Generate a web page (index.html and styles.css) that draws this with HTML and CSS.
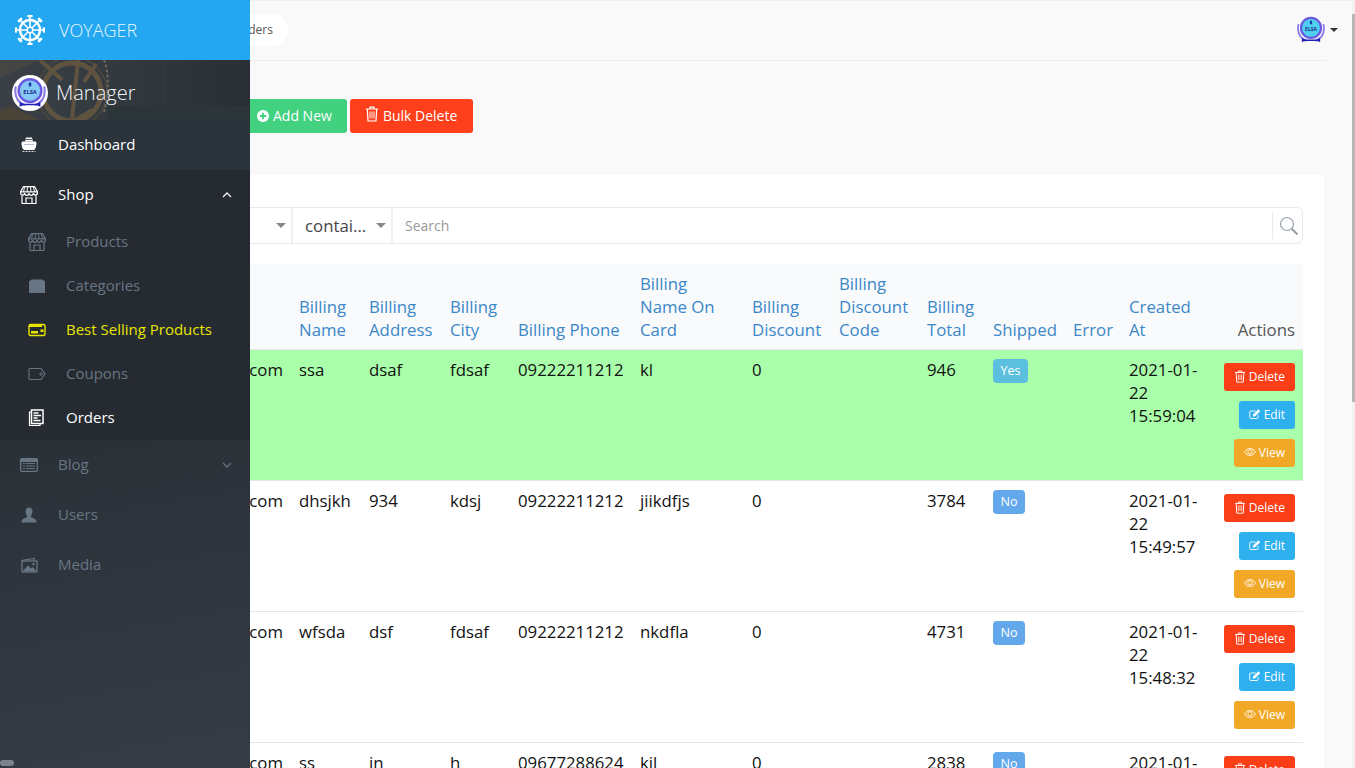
FILE: index.html
```html
<!DOCTYPE html>
<html lang="en">
<head>
<meta charset="utf-8">
<title>Orders</title>
<link rel="stylesheet" href="styles.css">
</head>
<body>
<svg class="defs" width="0" height="0">
  <symbol id="i-store" viewBox="0 0 18 18">
    <path d="M3.500 .7h11l3 5.200H.5z" fill="none" stroke="currentColor" stroke-width="1.200"/>
    <path d="M.6 5.900v1.200a2 2 0 0 0 4 0 2.200 2.200 0 0 0 4.400 0 2.200 2.200 0 0 0 4.400 0 2 2 0 0 0 4 0V5.900" fill="none" stroke="currentColor" stroke-width="1.200"/>
    <path d="M4.500 1 3.500 6M7.500 1 7 6M10.500 1 11 6M13.500 1l1 5" stroke="currentColor" stroke-width="1"/>
    <path d="M2 9.500v8h14v-8M6 17.500V12h6v5.500" fill="none" stroke="currentColor" stroke-width="1.200"/>
  </symbol>
  <symbol id="i-trash" viewBox="0 0 14 16">
    <path d="M1 3h12M5 3V1.200h4V3M2.300 3l.7 12h8l.7-12" fill="none" stroke="currentColor" stroke-width="1.200"/>
    <path d="M5 5.500v7M7 5.500v7M9 5.500v7" stroke="currentColor" stroke-width=".9"/>
  </symbol>
  <symbol id="i-edit" viewBox="0 0 16 14">
    <path d="M12 8.500V12a1.200 1.200 0 0 1-1.200 1H2.200A1.200 1.200 0 0 1 1 12V4a1.200 1.200 0 0 1 1.200-1H9" fill="none" stroke="currentColor" stroke-width="1.200"/>
    <path d="M5.500 7.500 12.500 .8l2.500 2.400-7 6.800-3 .6z" fill="currentColor"/>
  </symbol>
  <symbol id="i-eye" viewBox="0 0 14 10">
    <path d="M.6 5C2.500 2 4.600 1 7 1s4.500 1 6.400 4C11.500 8 9.400 9 7 9S2.500 8 .6 5z" fill="none" stroke="currentColor" stroke-width="1"/>
    <circle cx="7" cy="4.800" r="2.600" fill="none" stroke="currentColor" stroke-width="1"/>
  </symbol>
  <symbol id="i-emblem" viewBox="0 0 36 36">
    <path d="M3 11c-2 10 2 17 10 20M33 11c2 10-2 17-10 20" fill="none" stroke="#8d7ce6" stroke-width="2.200"/>
    <circle cx="18" cy="15.500" r="12" class="emblem-disc" stroke="#6a5be0" stroke-width="2.600"/>
    <path d="M7 27.500l4 1.800h14l4-1.800v5l-4-1.400H11l-4 1.400z" fill="#2222b8"/>
    <ellipse cx="18" cy="9" rx="1.500" ry="2.400" fill="#1f3fa8"/>
    <text x="18" y="19" class="emblem-text">ELSA</text>
  </symbol>
</svg>

<aside class="sidebar">
  <div class="brand">
    <svg class="brand-helm" viewBox="-15 -15 30 30" width="30" height="30">
      <circle r="10" fill="none" stroke="#fff" stroke-width="2.400"/>
      <circle r="2.800" fill="none" stroke="#fff" stroke-width="1.500"/>
      <g stroke="#fff" stroke-width="1.600">
        <path d="M0-15V-3M0 3V15M-15 0H-3M3 0H15M-10-10-2-2M2 2 10 10M10-10 2-2M-2 2-10 10"/>
      </g>
      <g stroke="#fff" stroke-width="2.600" stroke-linecap="round">
        <path d="M-1.500-14H1.500M-1.500 14H1.500M-14-1.500V1.500M14-1.500V1.500M-11-9-9-11M9-11 11-9M-11 9-9 11M9 11 11 9"/>
      </g>
    </svg>
    <span class="brand-name">VOYAGER</span>
  </div>
  <div class="profile">
    <svg class="profile-bg" viewBox="0 0 250 60" width="250" height="60">
      <defs>
        <linearGradient id="bg-fade" x1="0" x2="1" y1="0" y2="0">
          <stop offset="0" stop-color="#3a4045"/>
          <stop offset=".45" stop-color="#333a3f"/>
          <stop offset="1" stop-color="#292f34"/>
        </linearGradient>
      </defs>
      <rect width="250" height="60" fill="url(#bg-fade)"/>
      <rect x="108" y="46" width="142" height="14" fill="#2c3639"/>
      <path d="M165 0V46" stroke="#363d42" stroke-width="1"/>
      <path d="M0 0h40L0 18z" fill="#454644"/>
      <g fill="none" stroke="#5f5340">
        <circle cx="72" cy="32" r="29" stroke-width="5"/>
        <circle cx="72" cy="32" r="35" stroke-width="1.500" stroke="#4d473c"/>
        <path d="M78 0 72 60M96 4 84 22M92 50 76 60M40 0 62 20" stroke-width="4"/>
        <path d="M104 0c5 12 5 30 0 52" stroke="#70675a" stroke-width="2" stroke-dasharray="3 2"/>
      </g>
      <path d="M0 50 10 46 40 60H0z" fill="#4a4338"/>
    </svg>
    <span class="avatar-ring"><svg class="emblem-white" width="34" height="34"><use href="#i-emblem"/></svg></span>
    <span class="profile-name">Manager</span>
  </div>
  <nav class="menu">
    <a class="item item-light">
      <svg class="ico" viewBox="0 0 18 18" width="18" height="18">
        <path d="M6 1.500h6l1 4H5z" fill="#fff"/>
        <path d="M5.500 3.500h7" stroke="#2b343b" stroke-width=".8"/>
        <path d="M1.500 7c0-1 .8-1.500 1.500-1.500h12c.7 0 1.500.5 1.500 1.500 0 3-1 6-2.500 7H4C2.500 13 1.500 10 1.500 7z" fill="#fff"/>
        <path d="M4 8.500h10" stroke="#b8bec3" stroke-width="1"/>
        <path d="M2.500 15.500h13" stroke="#d5d9dc" stroke-width="1" stroke-dasharray="2 1"/>
      </svg>
      <span>Dashboard</span>
    </a>
    <a class="item item-open">
      <svg class="ico" width="18" height="18"><use href="#i-store"/></svg>
      <span>Shop</span>
      <svg class="chev" viewBox="0 0 10 6" width="10" height="6"><path d="M1 5l4-4 4 4" fill="none" stroke="currentColor" stroke-width="1.300"/></svg>
    </a>
    <div class="submenu">
      <a class="sub muted">
        <svg class="ico" width="18" height="18"><use href="#i-store"/></svg>
        <span>Products</span>
      </a>
      <a class="sub muted">
        <svg class="ico" viewBox="0 0 18 18" width="18" height="18"><path d="M3.500 2.500h11l2.500 2v11.500H1V4.500z" fill="currentColor"/></svg>
        <span>Categories</span>
      </a>
      <a class="sub active">
        <svg class="ico" viewBox="0 0 18 18" width="18" height="18">
          <path d="M1 3.500h13v2.500H1z" fill="currentColor"/>
          <rect x="1" y="3.500" width="16" height="11" rx="1.500" fill="none" stroke="currentColor" stroke-width="1.400"/>
          <path d="M3 10h7v2.500H3zM12.500 8.500h3V11h-3z" fill="currentColor"/>
        </svg>
        <span>Best Selling Products</span>
      </a>
      <a class="sub muted">
        <svg class="ico" viewBox="0 0 18 18" width="18" height="18">
          <path d="M2 3.500h11l4 5.500-4 5.500H2a1 1 0 0 1-1-1V4.500a1 1 0 0 1 1-1z" fill="none" stroke="currentColor" stroke-width="1.100"/>
          <circle cx="13" cy="9" r="1.200" fill="none" stroke="currentColor"/>
        </svg>
        <span>Coupons</span>
      </a>
      <a class="sub sub-light">
        <svg class="ico" viewBox="0 0 18 18" width="18" height="18">
          <path d="M3 3H1.500v13.500H12V15" fill="none" stroke="currentColor" stroke-width="1.200"/>
          <rect x="3.500" y="1" width="11.500" height="13.500" fill="none" stroke="currentColor" stroke-width="1.500"/>
          <path d="M5.500 4h5M5.500 6.500h7.500M5.500 9h4M5.500 11.500h7" stroke="currentColor" stroke-width="1.300"/>
        </svg>
        <span>Orders</span>
      </a>
    </div>
    <a class="item muted">
      <svg class="ico" viewBox="0 0 18 18" width="18" height="18">
        <rect x=".7" y="2.700" width="16.600" height="12.600" rx="1" fill="none" stroke="currentColor" stroke-width="1.300"/>
        <path d="M1 3h16v2.500H1zM3 7.500h2M6 7.500h9M3 10h2M6 10h9M3 12.500h2M6 12.500h9" fill="currentColor" stroke="currentColor" stroke-width="1"/>
      </svg>
      <span>Blog</span>
      <svg class="chev" viewBox="0 0 10 6" width="10" height="6"><path d="M1 1l4 4 4-4" fill="none" stroke="currentColor" stroke-width="1.300"/></svg>
    </a>
    <a class="item muted">
      <svg class="ico" viewBox="0 0 18 18" width="18" height="18">
        <path d="M9 1.500c2.300 0 3.500 1.800 3.500 4S11 9 11 10.500c0 1.500 5 1.500 5.500 5v1h-15v-1c.5-3.500 5.500-3.500 5.500-5C7 9 5.500 7.700 5.500 5.500s1.200-4 3.500-4z" fill="currentColor"/>
      </svg>
      <span>Users</span>
    </a>
    <a class="item muted">
      <svg class="ico" viewBox="0 0 18 18" width="18" height="18">
        <path d="M1.500 4.500 14 2.500l.5 2" fill="none" stroke="currentColor" stroke-width="1.200"/>
        <rect x="2" y="5" width="15" height="11" fill="none" stroke="currentColor" stroke-width="1.300"/>
        <path d="M2.500 15.500 8 9.500l3 3 2-1.500 3.500 4.500z" fill="currentColor"/>
        <circle cx="13.500" cy="8" r="1.200" fill="currentColor"/>
      </svg>
      <span>Media</span>
    </a>
  </nav>
  <i class="side-thumb"></i>
</aside>

<main class="main">
  <header class="navbar">
    <div class="crumb">Orders</div>
    <div class="user">
      <svg width="30" height="30"><use href="#i-emblem"/></svg>
      <i class="caret"></i>
    </div>
  </header>
  <div class="nav-rule"></div>

  <div class="toolbar">
    <a class="btn btn-add">
      <svg class="add-ico" viewBox="0 0 12 12" width="12" height="12"><circle cx="6" cy="6" r="6" fill="#fff"/><path d="M6 2.800v6.400M2.800 6h6.400" stroke="#42d17f" stroke-width="1.800"/></svg>
      Add New
    </a>
    <a class="btn btn-bulk">
      <svg width="14" height="16" class="bulk-ico"><use href="#i-trash"/></svg>
      Bulk Delete
    </a>
  </div>

  <section class="card">
    <div class="search">
      <div class="select select-a"><i class="arrow"></i></div>
      <div class="select select-b"><span>contai...</span><i class="arrow"></i></div>
      <div class="search-input">Search</div>
      <div class="search-btn">
        <svg viewBox="0 0 20 20" width="20" height="20">
          <circle cx="8" cy="8" r="6.500" fill="none" stroke="#9aa3ad" stroke-width="1.200"/>
          <path d="M12.800 12.800 18.500 18.500" stroke="#9aa3ad" stroke-width="2.200"/>
        </svg>
      </div>
    </div>

    <table class="orders">
      <colgroup>
        <col class="c0"><col class="c1"><col class="c2"><col class="c3"><col class="c4"><col class="c5"><col class="c6"><col class="c7"><col class="c8"><col class="c9"><col class="c10"><col class="c11"><col class="c12">
      </colgroup>
      <thead>
        <tr>
          <th>Billing Email</th>
          <th>Billing Name</th>
          <th>Billing Address</th>
          <th>Billing City</th>
          <th>Billing Phone</th>
          <th>Billing Name On Card</th>
          <th>Billing Discount</th>
          <th>Billing Discount Code</th>
          <th>Billing Total</th>
          <th>Shipped</th>
          <th>Error</th>
          <th>Created At</th>
          <th class="th-actions">Actions</th>
        </tr>
      </thead>
      <tbody>
        <tr class="row-shipped">
          <td class="email">customer@mail.com</td><td>ssa</td><td>dsaf</td><td>fdsaf</td><td>09222211212</td><td>kl</td><td>0</td><td></td><td>946</td>
          <td><span class="badge badge-yes">Yes</span></td><td></td><td>2021-01-22 15:59:04</td>
          <td><div class="actions">
            <a class="mini mini-del"><svg width="12" height="13"><use href="#i-trash"/></svg>Delete</a>
            <a class="mini mini-edit"><svg width="12" height="12"><use href="#i-edit"/></svg>Edit</a>
            <a class="mini mini-view"><svg width="12" height="10"><use href="#i-eye"/></svg>View</a>
          </div></td>
        </tr>
        <tr>
          <td class="email">customer@mail.com</td><td>dhsjkh</td><td>934</td><td>kdsj</td><td>09222211212</td><td>jiikdfjs</td><td>0</td><td></td><td>3784</td>
          <td><span class="badge badge-no">No</span></td><td></td><td>2021-01-22 15:49:57</td>
          <td><div class="actions">
            <a class="mini mini-del"><svg width="12" height="13"><use href="#i-trash"/></svg>Delete</a>
            <a class="mini mini-edit"><svg width="12" height="12"><use href="#i-edit"/></svg>Edit</a>
            <a class="mini mini-view"><svg width="12" height="10"><use href="#i-eye"/></svg>View</a>
          </div></td>
        </tr>
        <tr>
          <td class="email">customer@mail.com</td><td>wfsda</td><td>dsf</td><td>fdsaf</td><td>09222211212</td><td>nkdfla</td><td>0</td><td></td><td>4731</td>
          <td><span class="badge badge-no">No</span></td><td></td><td>2021-01-22 15:48:32</td>
          <td><div class="actions">
            <a class="mini mini-del"><svg width="12" height="13"><use href="#i-trash"/></svg>Delete</a>
            <a class="mini mini-edit"><svg width="12" height="12"><use href="#i-edit"/></svg>Edit</a>
            <a class="mini mini-view"><svg width="12" height="10"><use href="#i-eye"/></svg>View</a>
          </div></td>
        </tr>
        <tr>
          <td class="email">customer@mail.com</td><td>ss</td><td>in</td><td>h</td><td>09677288624</td><td>kil</td><td>0</td><td></td><td>2838</td>
          <td><span class="badge badge-no">No</span></td><td></td><td>2021-01-22 15:40:11</td>
          <td><div class="actions">
            <a class="mini mini-del"><svg width="12" height="13"><use href="#i-trash"/></svg>Delete</a>
            <a class="mini mini-edit"><svg width="12" height="12"><use href="#i-edit"/></svg>Edit</a>
            <a class="mini mini-view"><svg width="12" height="10"><use href="#i-eye"/></svg>View</a>
          </div></td>
        </tr>
      </tbody>
    </table>
  </section>
</main>
<div class="scroll-track"><i class="scroll-thumb"></i></div>
</body>
</html>
```

FILE: styles.css
```css
* { box-sizing: border-box; }
html, body { height: 768px; overflow: hidden; }
body {
  margin: 0;
  background: #f9f9f9;
  color: #111;
  font-family: "Open Sans", "Noto Sans", sans-serif;
  font-size: 16.8px;
}
a { text-decoration: none; color: inherit; }
.defs { position: absolute; }
.emblem-text { font: 700 6px "Open Sans", sans-serif; fill: #1a2a8a; text-anchor: middle; }
.emblem-disc { fill: var(--disc, #4fd0f0); }
.emblem-white { --disc: #86c8f6; }

/* sidebar */
.sidebar {
  position: fixed;
  left: 0; top: 0;
  z-index: 5;
  width: 250px;
  height: 768px;
  background: linear-gradient(170deg, #262b31 0%, #282e34 45%, #353c45 100%);
  display: flex;
  flex-direction: column;
}
.brand {
  height: 60px;
  flex: none;
  background: #22a7f0;
  display: flex;
  align-items: center;
  padding-left: 15px;
  gap: 14px;
}
.brand-name { color: #e9f6fe; font-size: 18px; font-weight: 300; }
.profile {
  position: relative;
  height: 60px;
  flex: none;
  display: flex;
  align-items: center;
  padding-left: 12px;
  gap: 8px;
  overflow: hidden;
}
.profile-bg { position: absolute; left: 0; top: 0; }
.avatar-ring {
  position: relative;
  width: 36px; height: 36px;
  margin-top: 6px;
  border-radius: 50%;
  background: #fff;
  display: flex;
  align-items: center;
  justify-content: center;
}
.profile-name {
  position: relative;
  color: #f2f6fa;
  font-size: 20px;
  font-weight: 300;
  margin-top: 4px;
}
.menu { display: flex; flex-direction: column; }
.item {
  height: 50px;
  display: flex;
  align-items: center;
  padding-left: 20px;
  font-size: 15px;
  color: #fff;
}
.item span, .sub span { margin-top: -2px; }
.item .ico { margin-right: 20px; flex: none; }
.item-light { background: #2b343b; }
.item-open { background: #262b31; }
.muted { color: #687684; }
.chev { margin-left: auto; margin-right: 18px; opacity: .95; }
.submenu { background: #262b31; display: flex; flex-direction: column; }
.sub {
  height: 44px;
  display: flex;
  align-items: center;
  padding-left: 28px;
  font-size: 15px;
}
.sub .ico { margin-right: 20px; flex: none; }
.active { color: #e6e600; }
.sub-light { color: #fff; }
.side-thumb {
  position: absolute;
  left: 0; top: 760px;
  width: 14px; height: 6px;
  border-radius: 3px;
  background: #7d838a;
}

/* main */
.main { padding-right: 31px; border-top: 1px solid #efefef; }
.navbar {
  height: 59px;
  display: flex;
  align-items: center;
  justify-content: space-between;
  margin-right: -31px;
  padding-left: 200px;
  padding-right: 17px;
}
.crumb {
  background: #fff;
  height: 32px;
  margin-top: -1px;
  border-radius: 16px;
  padding: 0 15px 0 34px;
  font-size: 12px;
  line-height: 32px;
  color: #555;
}
.user { display: flex; align-items: center; gap: 4px; margin-top: -1px; }
.caret {
  width: 0; height: 0;
  border-left: 4px solid transparent;
  border-right: 4px solid transparent;
  border-top: 4px solid #333;
}
.nav-rule { height: 1px; background: #ededed; margin-right: -2px; }

.toolbar {
  display: flex;
  gap: 3px;
  padding: 38px 0 0 245px;
}
.btn {
  height: 34px;
  display: flex;
  align-items: center;
  border-radius: 3px;
  color: #fff;
  font-size: 14px;
  gap: 4px;
  padding: 0 15px 2px 12px;
}
.btn-add { background: #42d17f; }
.btn-bulk { background: #fd401b; padding: 0 16px 2px 15px; }
.add-ico { margin-top: 2px; }
.bulk-ico { margin-top: -2px; }

.card {
  margin: 42px 0 0 20px;
  background: #fff;
  padding: 32px 21px 0;
  border-radius: 3px 3px 0 0;
}
.search {
  height: 37px;
  display: flex;
  border: 1px solid #e9e9f0;
  border-radius: 6px;
  align-items: stretch;
}
.select {
  position: relative;
  display: flex;
  align-items: center;
  border-right: 2px solid #eeeef3;
  color: #444;
}
.select-a { width: 251px; }
.select-b { width: 100px; padding-left: 12px; }
.arrow {
  position: absolute;
  right: 5px; top: 15px;
  width: 0; height: 0;
  border-left: 5px solid transparent;
  border-right: 5px solid transparent;
  border-top: 5px solid #888;
}
.search-input {
  flex: 1;
  display: flex;
  align-items: center;
  padding-left: 12px;
  font-size: 14px;
  color: #999;
}
.search-btn {
  width: 30px;
  margin: 4px 0;
  border-left: 1px solid #e9e9f0;
  display: flex;
  align-items: center;
  justify-content: center;
  padding-left: 3px;
}

/* table */
.orders {
  width: 1262px;
  margin-top: 20px;
  table-layout: fixed;
  border-collapse: collapse;
}
.c0 { width: 250px; } .c1 { width: 70px; } .c2 { width: 81px; } .c3 { width: 68px; }
.c4 { width: 122px; } .c5 { width: 112px; } .c6 { width: 87px; } .c7 { width: 88px; }
.c8 { width: 66px; } .c9 { width: 80px; } .c10 { width: 56px; } .c11 { width: 95px; } .c12 { width: 87px; }
th {
  background: #f8fafc;
  padding: 8px;
  text-align: left;
  vertical-align: bottom;
  font-weight: 400;
  color: #3b87c8;
  line-height: 23px;
}
.th-actions { color: #555; text-align: right; }
td {
  padding: 8px;
  vertical-align: top;
  line-height: 23px;
  border-top: 1px solid #e6e6e6;
}
.email { text-align: right; overflow: hidden; white-space: nowrap; }
.row-shipped td { background: #aaffaa; }
.badge {
  display: inline-block;
  height: 24px;
  line-height: 24px;
  padding: 0 7.500px;
  margin-top: 1px;
  vertical-align: top;
  border-radius: 4px;
  color: #fff;
  font-size: 12.600px;
}
.badge-yes { background: #5bc0de; }
.badge-no { background: #62a8ea; }
.actions {
  display: flex;
  flex-direction: column;
  align-items: flex-end;
  gap: 10px;
  padding: 5px 0;
}
.mini {
  height: 28px;
  display: flex;
  align-items: center;
  gap: 3px;
  padding: 0 10px 2px;
  border-radius: 3px;
  color: #fff;
  font-size: 12px;
}
.mini-del { background: #fa3e17; }
.mini-edit { background: #2fb0ee; }
.mini-view { background: #f2a827; }

.scroll-track {
  position: fixed;
  right: 0; top: 0;
  width: 3px;
  height: 768px;
  background: #f1f1f1;
}
.scroll-thumb {
  display: block;
  margin-top: 14px;
  height: 388px;
  background: #b5b5b5;
}
```
